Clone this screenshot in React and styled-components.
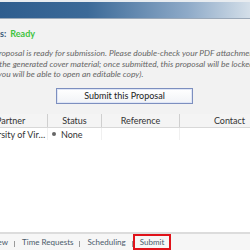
import React from 'react';
import styled, { createGlobalStyle } from 'styled-components';

const GlobalStyle = createGlobalStyle`
	html, body {
		margin: 0;
		padding: 0;
		width: 250px;
		height: 250px;
		overflow: hidden;
		background: #ffffff;
		font-family: Lato, "Liberation Sans", sans-serif;
	}
`;

const Frame = styled.div`
	width: 250px;
	height: 250px;
	display: flex;
	flex-direction: column;
	overflow: hidden;
`;

const TitleBar = styled.div`
	height: 16px;
	flex-shrink: 0;
	border-top: 2px solid #e8ecf0;
	border-bottom: 1px solid #9aa8b8;
	background: linear-gradient(to right, #2e5d8e 0%, #3c6a98 35%, #8eaac8 75%, #d4dfe9 100%);
`;

const Panel = styled.section`
	box-sizing: border-box;
	background: #f2f2f2;
	padding: 8px 0 0 0;
	height: 95px;
	flex-shrink: 0;
	margin-left: -24px;
	font-size: 9px;
`;

const StatusLine = styled.div`
	font-weight: bold;
	color: #3a5a7a;
	height: 14px;
	line-height: 14px;
	padding-left: 3px;
`;

const Ready = styled.span`
	color: #3fc43f;
	margin-left: 4px;
`;

const Message = styled.div`
	margin-top: 7px;
	font-size: 8.45px;
	font-style: italic;
	color: #666;
	line-height: 10.5px;
`;

const Line = styled.div`
	white-space: nowrap;
	padding-left: ${p => p.$indent}px;
`;

const ButtonRow = styled.div`
	display: flex;
	padding-left: 80px;
	margin-top: 8px;
`;

const Button = styled.button`
	width: 137px;
	height: 16px;
	padding: 0;
	border: 1px solid #7d8fbf;
	box-shadow: inset 0 0 0 1px #dfe6f6;
	background: linear-gradient(#ffffff, #f1f3f7);
	font-family: Lato, "Liberation Sans", sans-serif;
	font-size: 9px;
	color: #222;
`;

const Table = styled.div`
	flex: 1;
	background: #ffffff;
	margin-left: -30px;
	font-size: 9px;
`;

const Row = styled.div`
	display: grid;
	grid-template-columns: 78px 54px 78px 100px;
	height: ${p => (p.$header ? 13 : 12)}px;
	background: ${p => (p.$header ? '#f4f4f4' : '#ffffff')};
	border-bottom: ${p => (p.$header ? '1px solid #d8d8d8' : 'none')};
`;

const Cell = styled.div`
	display: flex;
	align-items: center;
	justify-content: ${p => (p.$left ? 'flex-start' : 'center')};
	padding-left: ${p => p.$pad || 0}px;
	white-space: nowrap;
	overflow: hidden;
	color: #333;
	border-right: ${p => (p.$header ? '1px solid #cfcfcf' : '1px solid #f0f0f0')};
`;

const CellText = styled.span`
	overflow: hidden;
	text-overflow: ellipsis;
	white-space: nowrap;
	padding-right: 1px;
`;

const Dot = styled.span`
	width: 4px;
	height: 4px;
	border-radius: 50%;
	background: #666;
	margin-right: 5px;
`;

const Tabs = styled.nav`
	height: 16px;
	flex-shrink: 0;
	display: flex;
	align-items: center;
	background: #f6f6f6;
	border-top: 2px solid #dcdcdc;
	margin-left: -33px;
	font-size: 8px;
`;

const Tab = styled.div`
	position: relative;
	height: 16px;
	display: flex;
	align-items: center;
	padding: 0 5px;
	color: #4a5a6a;
	white-space: nowrap;
	box-sizing: border-box;
	border: 2px solid ${p => (p.$active ? '#e0121a' : 'transparent')};

	&::after {
		content: '';
		position: absolute;
		right: -2px;
		bottom: 1px;
		height: 6px;
		border-right: 1px solid ${p => (p.$active ? 'transparent' : '#9a9a9a')};
	}
`;

const App = () => (
	<Frame>
		<GlobalStyle />
		<TitleBar />
		<Panel>
			<StatusLine>
				Status:<Ready>Ready</Ready>
			</StatusLine>
			<Message>
				<Line $indent={2}>This proposal is ready for submission. Please double-check your PDF attachments</Line>
				<Line $indent={8}>and the generated cover material; once submitted, this proposal will be locked</Line>
				<Line $indent={6}>(but you will be able to open an editable copy).</Line>
			</Message>
			<ButtonRow>
				<Button>Submit this Proposal</Button>
			</ButtonRow>
		</Panel>
		<Table>
			<Row $header>
				<Cell $header $left $pad={26}>
					Partner
				</Cell>
				<Cell $header>Status</Cell>
				<Cell $header>Reference</Cell>
				<Cell $header>Contact</Cell>
			</Row>
			<Row>
				<Cell $left $pad={5}>
					<CellText>University of Virginia</CellText>
				</Cell>
				<Cell $left $pad={4}>
					<Dot />
					None
				</Cell>
				<Cell />
				<Cell />
			</Row>
		</Table>
		<Tabs>
			<Tab>Overview</Tab>
			<Tab>Time Requests</Tab>
			<Tab>Scheduling</Tab>
			<Tab $active>Submit</Tab>
		</Tabs>
	</Frame>
);

export default App;
